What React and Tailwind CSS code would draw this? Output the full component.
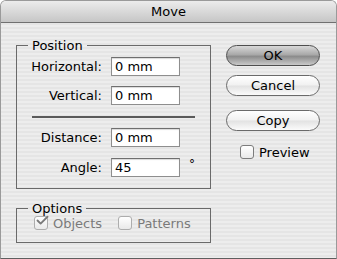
import { Check } from "lucide-react";

const font = { fontFamily: '"DejaVu Sans", "Liberation Sans", sans-serif' };

function Field({ label, value, unit }) {
  return (
    <div className="flex items-center h-[19px]">
      <span className="w-[85px] text-right text-[13px] text-black leading-none">{label}</span>
      <div className="ml-[9px] w-[69px] h-[19px] bg-white border border-[#8e8e8e] border-t-[#6f6f6f] shadow-[inset_0_1px_1px_rgba(0,0,0,0.15)] pl-[3px] flex items-center text-[13px] text-black leading-none">
        {value}
      </div>
      {unit && <span className="ml-[9px] text-[12px] -mt-[8px] text-black">{unit}</span>}
    </div>
  );
}

function Box({ checked, disabled, label }) {
  return (
    <div className="flex items-center">
      <div
        className={
          "relative w-[14px] h-[14px] rounded-[3px] border bg-[linear-gradient(to_bottom,#ffffff,#e9e9e9)] " +
          (disabled ? "border-[#adadad]" : "border-[#7c7c7c]")
        }
      >
        {checked && (
          <Check
            className="absolute -top-[4px] left-[0px] text-[#7a7a7a]"
            size={15}
            strokeWidth={3}
          />
        )}
      </div>
      <span className={"ml-[5px] text-[13px] leading-none " + (disabled ? "text-[#7a7a7a]" : "text-black")}>
        {label}
      </span>
    </div>
  );
}

function AquaButton({ children, primary }) {
  return (
    <button
      className={
        "w-[94px] h-[21px] rounded-full border text-[13px] leading-none text-black flex items-center justify-center " +
        (primary
          ? "border-[#4e4e4e] bg-[linear-gradient(to_bottom,#d9d9d9_0%,#a9a9a9_45%,#8c8c8c_55%,#c9c9c9_100%)]"
          : "border-[#6a6a6a] bg-[linear-gradient(to_bottom,#ffffff_0%,#f1f1f1_48%,#e2e2e2_52%,#fbfbfb_100%)]")
      }
      style={font}
    >
      {children}
    </button>
  );
}

export default function App() {
  return (
    <div
      className="w-[337px] h-[259px] overflow-hidden rounded-t-[6px] border border-[#9a9a9a] border-b-[#5e5e5e] bg-[repeating-linear-gradient(to_bottom,#ededed_0px,#ededed_2px,#e5e5e5_2px,#e5e5e5_4px)]"
      style={font}
    >
      <div className="h-[22px] border-b border-[#707070] bg-[linear-gradient(to_bottom,#ececec,#c6c6c6)] flex items-center justify-center text-[13px] text-black">
        Move
      </div>

      <div className="flex">
        <div className="ml-[15px] w-[195px]">
          <fieldset className="mt-[15px] border border-[#6a6a6a] pb-[11px]">
            <legend className="ml-[11px] px-[4px] h-[15px] text-[13px] leading-[15px] text-black">Position</legend>
            <div className="mt-[4px]">
              <Field label="Horizontal:" value="0 mm" />
            </div>
            <div className="mt-[10px]">
              <Field label="Vertical:" value="0 mm" />
            </div>
            <div className="mt-[11px] ml-[15px] w-[163px] h-[2px] bg-[#5a5a5a]" />
            <div className="mt-[10px]">
              <Field label="Distance:" value="0 mm" />
            </div>
            <div className="mt-[11px]">
              <Field label="Angle:" value="45" unit="°" />
            </div>
          </fieldset>

          <fieldset className="mt-[12px] border border-[#6a6a6a] pb-[12px]">
            <legend className="ml-[11px] px-[4px] h-[15px] text-[13px] leading-[15px] text-black">Options</legend>
            <div className="flex items-center pl-[17px] h-[14px]">
              <Box checked disabled label="Objects" />
              <div className="ml-[16px]">
                <Box disabled label="Patterns" />
              </div>
            </div>
          </fieldset>
        </div>

        <div className="ml-[15px] mt-[22px] flex flex-col">
          <AquaButton primary>OK</AquaButton>
          <div className="mt-[9px]">
            <AquaButton>Cancel</AquaButton>
          </div>
          <div className="mt-[14px]">
            <AquaButton>Copy</AquaButton>
          </div>
          <div className="mt-[14px] ml-[14px]">
            <Box label="Preview" />
          </div>
        </div>
      </div>
    </div>
  );
}
